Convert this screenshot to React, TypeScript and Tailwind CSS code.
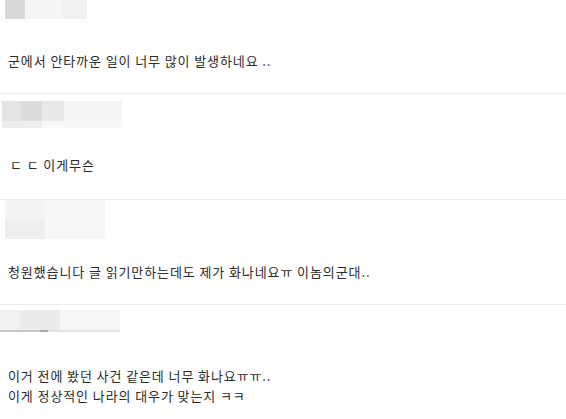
import React from "react";

const font = { fontFamily: '"Noto Sans CJK KR", "Noto Sans", sans-serif' };

export default function App() {
  return (
    <div className="w-[566px] h-[419px] bg-white overflow-hidden text-[13px] leading-[20px] tracking-[0.9px] text-[#2a2a2a]" style={font}>
      {/* Comment 1 */}
      <div className="h-[93px] flex flex-col">
        <div className="flex h-[19px] ml-[5px]">
          <div className="w-[20px] bg-[#d9d8d9]" />
          <div className="w-[38px] bg-[#f6f5f6]" />
          <div className="w-[24px] bg-[#f1f0f1]" />
        </div>
        <div className="mt-[32px] pl-[8px]">군에서 안타까운 일이 너무 많이 발생하네요 ..</div>
      </div>
      <div className="h-px bg-[#ececec]" />
      {/* Comment 2 */}
      <div className="h-[105px] flex flex-col pt-[7px]">
        <div className="ml-[2px] flex flex-col w-[120px] h-[27px]">
          <div className="flex h-[20px]">
            <div className="w-[20px] bg-[#e3e3e4]" />
            <div className="w-[20px] bg-[#dcdcdd]" />
            <div className="w-[22px] bg-[#e9e9ea]" />
            <div className="w-[58px] bg-[#f5f5f6]" />
          </div>
          <div className="flex h-[7px]">
            <div className="w-[40px] bg-[#eeeeee]" />
            <div className="w-[80px] bg-[#f8f8f8]" />
          </div>
        </div>
        <div className="mt-[27px] pl-[10px]">ㄷ ㄷ 이게무슨</div>
      </div>
      <div className="h-px bg-[#ececec]" />
      {/* Comment 3 */}
      <div className="h-[104px] flex flex-col">
        <div className="ml-[5px] flex w-[100px] h-[39px]">
          <div className="w-[40px] flex flex-col">
            <div className="h-[20px] bg-[#f3f3f4]" />
            <div className="h-[19px] bg-[#eeeeef]" />
          </div>
          <div className="w-[60px] bg-[#f7f7f8]" />
        </div>
        <div className="mt-[23px] pl-[8px]">청원했습니다 글 읽기만하는데도 제가 화나네요ㅠ 이놈의군대..</div>
      </div>
      <div className="h-px bg-[#ececec]" />
      {/* Comment 4 */}
      <div className="flex flex-col pt-[5px]">
        <div className="flex flex-col w-[120px] h-[22px]">
          <div className="flex h-[20px]">
            <div className="w-[20px] bg-[#f0f0f0]" />
            <div className="w-[40px] bg-[#ebebeb]" />
            <div className="w-[60px] bg-[#f6f6f6]" />
          </div>
          <div className="flex h-[2px]">
            <div className="w-[40px] bg-[#c8c8c8]" />
            <div className="w-[8px] bg-[#aaaaaa]" />
            <div className="w-[72px] bg-[#e4e4e4]" />
          </div>
        </div>
        <div className="mt-[34px] pl-[8px]">
          <div>이거 전에 봤던 사건 같은데 너무 화나요ㅠㅠ..</div>
          <div>이게 정상적인 나라의 대우가 맞는지 ㅋㅋ</div>
        </div>
      </div>
    </div>
  );
}
